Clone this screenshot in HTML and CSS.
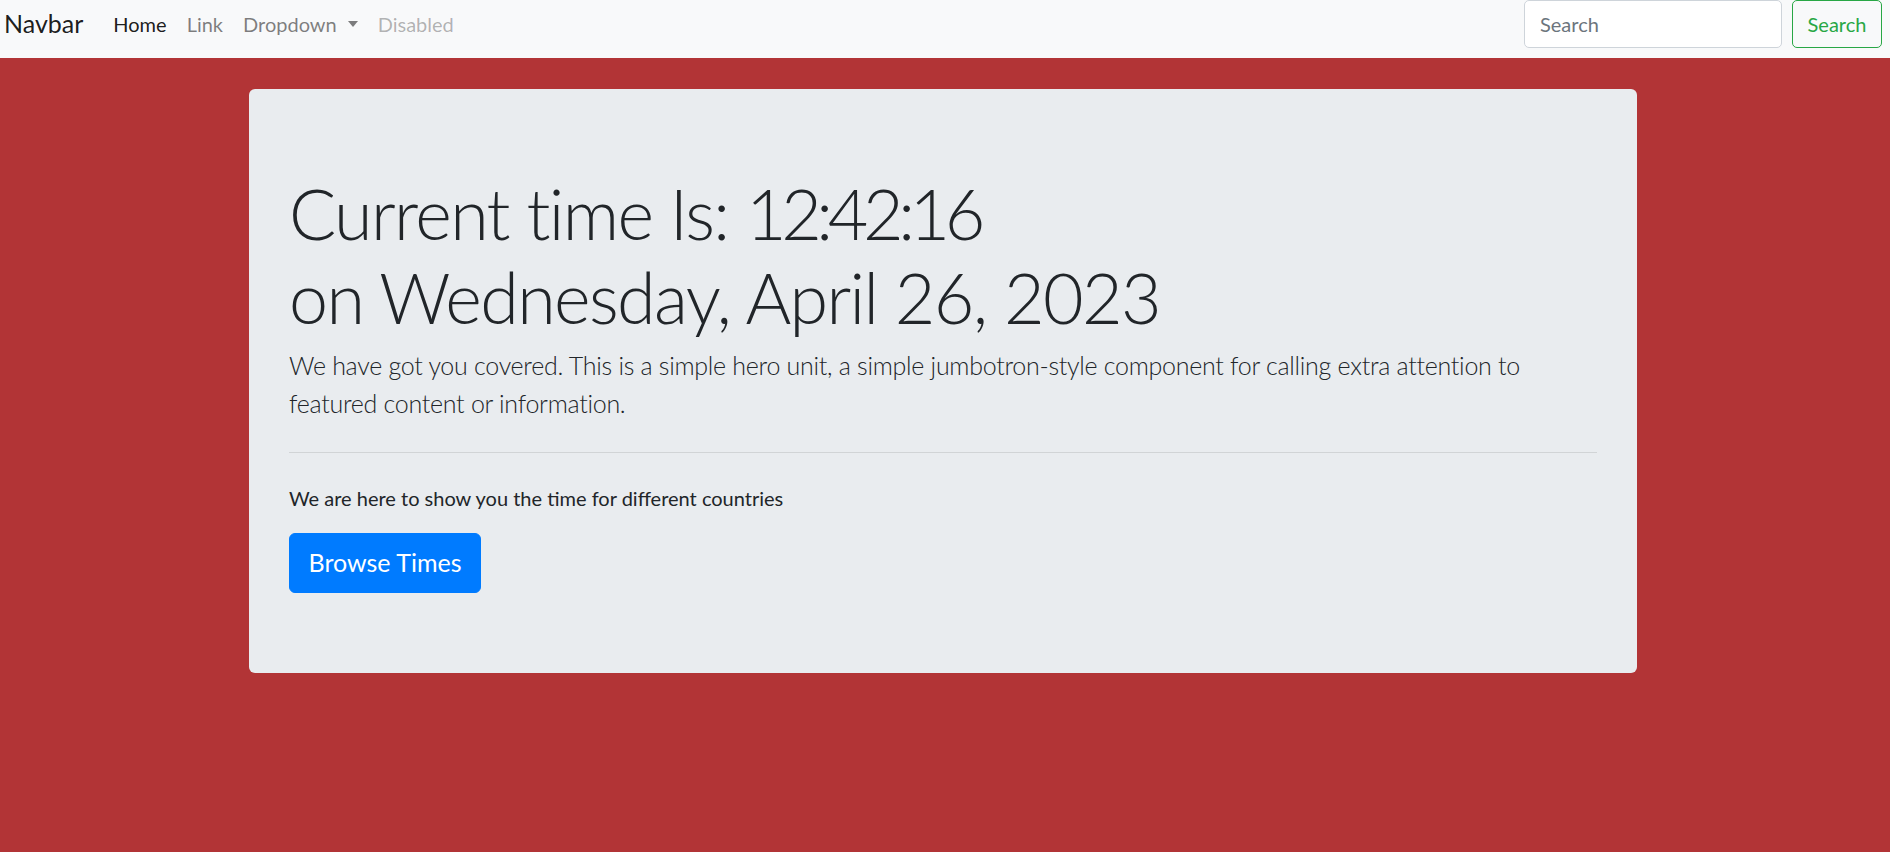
FILE: index.html
```html
<!DOCTYPE html>
<html lang="en">
<head>
<meta charset="utf-8">
<title>Current time</title>
<link rel="stylesheet" href="styles.css">
</head>
<body>
<nav class="navbar">
  <a class="brand" href="#">Navbar</a>
  <ul class="nav">
    <li><a class="nav-link active" href="#">Home</a></li>
    <li><a class="nav-link" href="#">Link</a></li>
    <li><a class="nav-link" href="#">Dropdown<span class="caret"></span></a></li>
    <li><a class="nav-link disabled" href="#">Disabled</a></li>
  </ul>
  <form class="search">
    <input class="search-input" type="search" placeholder="Search">
    <button class="search-btn" type="button">Search</button>
  </form>
</nav>
<main class="jumbotron">
  <h1 class="display">Current time Is: <span class="time">12:42:16</span><br>on Wednesday, April 26, 2023</h1>
  <p class="lead">We have got you covered. This is a simple hero unit, a simple jumbotron-style component for calling extra attention to featured content or information.</p>
  <hr class="divider">
  <p class="note">We are here to show you the time for different countries</p>
  <a class="btn-primary" href="#">Browse Times</a>
</main>
</body>
</html>
```
FILE: styles.css
```css
* { box-sizing: border-box; }
html, body { margin: 0; padding: 0; }
body {
  background: #b23436;
  font-family: "Lato", "Liberation Sans", sans-serif;
  color: #212529;
  height: 852px;
  overflow: hidden;
}
a { text-decoration: none; }

.navbar {
  display: flex;
  align-items: center;
  height: 57.5px;
  padding: 0 8px 10px 4px;
  background: #f8f9fa;
}
.brand {
  font-size: 25px;
  line-height: 37.5px;
  padding: 6.25px 0;
  margin-right: 20px;
  color: rgba(0, 0, 0, .9);
}
.nav {
  display: flex;
  list-style: none;
  margin: 0;
  padding: 0;
  flex: 1;
}
.nav-link {
  display: block;
  padding: 10px 10px;
  font-size: 20px;
  line-height: 30px;
  color: rgba(0, 0, 0, .5);
}
.nav-link.active { color: rgba(0, 0, 0, .9); }
.nav-link.disabled { color: rgba(0, 0, 0, .3); }
.caret {
  display: inline-block;
  margin-left: 11px;
  vertical-align: 5px;
  border-top: 6px solid rgba(0, 0, 0, .5);
  border-left: 5.5px solid transparent;
  border-right: 5.5px solid transparent;
}
.search {
  display: flex;
  align-items: center;
  gap: 10px;
}
.search-input {
  width: 258px;
  height: 47.5px;
  padding: 7.5px 15px;
  font-family: inherit;
  font-size: 20px;
  color: #495057;
  background: #fff;
  border: 1px solid #ced4da;
  border-radius: 5px;
  outline: none;
}
.search-input::placeholder { color: #6c757d; }
.search-btn {
  width: 90px;
  height: 47.5px;
  padding: 7.5px 0;
  font-family: inherit;
  font-size: 20px;
  line-height: 30px;
  color: #28a745;
  background: transparent;
  border: 1px solid #28a745;
  border-radius: 5px;
}

.jumbotron {
  display: block;
  width: 1388px;
  margin: 31.5px 0 0 249px;
  padding: 80px 40px;
  background: #e9ecef;
  border-radius: 6px;
}
.display {
  margin: 0 0 8px;
  padding-top: 2px;
  font-size: 70px;
  font-weight: 300;
  line-height: 84px;
  letter-spacing: -1.6px;
}
.time { letter-spacing: -5.4px; }
.lead {
  margin: 0 0 20px;
  font-size: 25px;
  font-weight: 300;
  line-height: 37.5px;
  letter-spacing: -0.28px;
}
.divider {
  margin: 30px 0;
  border: 0;
  border-top: 1px solid rgba(0, 0, 0, .1);
}
.note {
  margin: 0 0 20px;
  font-size: 20px;
  line-height: 30px;
}
.btn-primary {
  display: inline-block;
  width: 192px;
  padding: 10px 0;
  text-align: center;
  font-size: 25px;
  line-height: 37.5px;
  color: #fff;
  background: #007bff;
  border: 1px solid #007bff;
  border-radius: 6px;
}
```
